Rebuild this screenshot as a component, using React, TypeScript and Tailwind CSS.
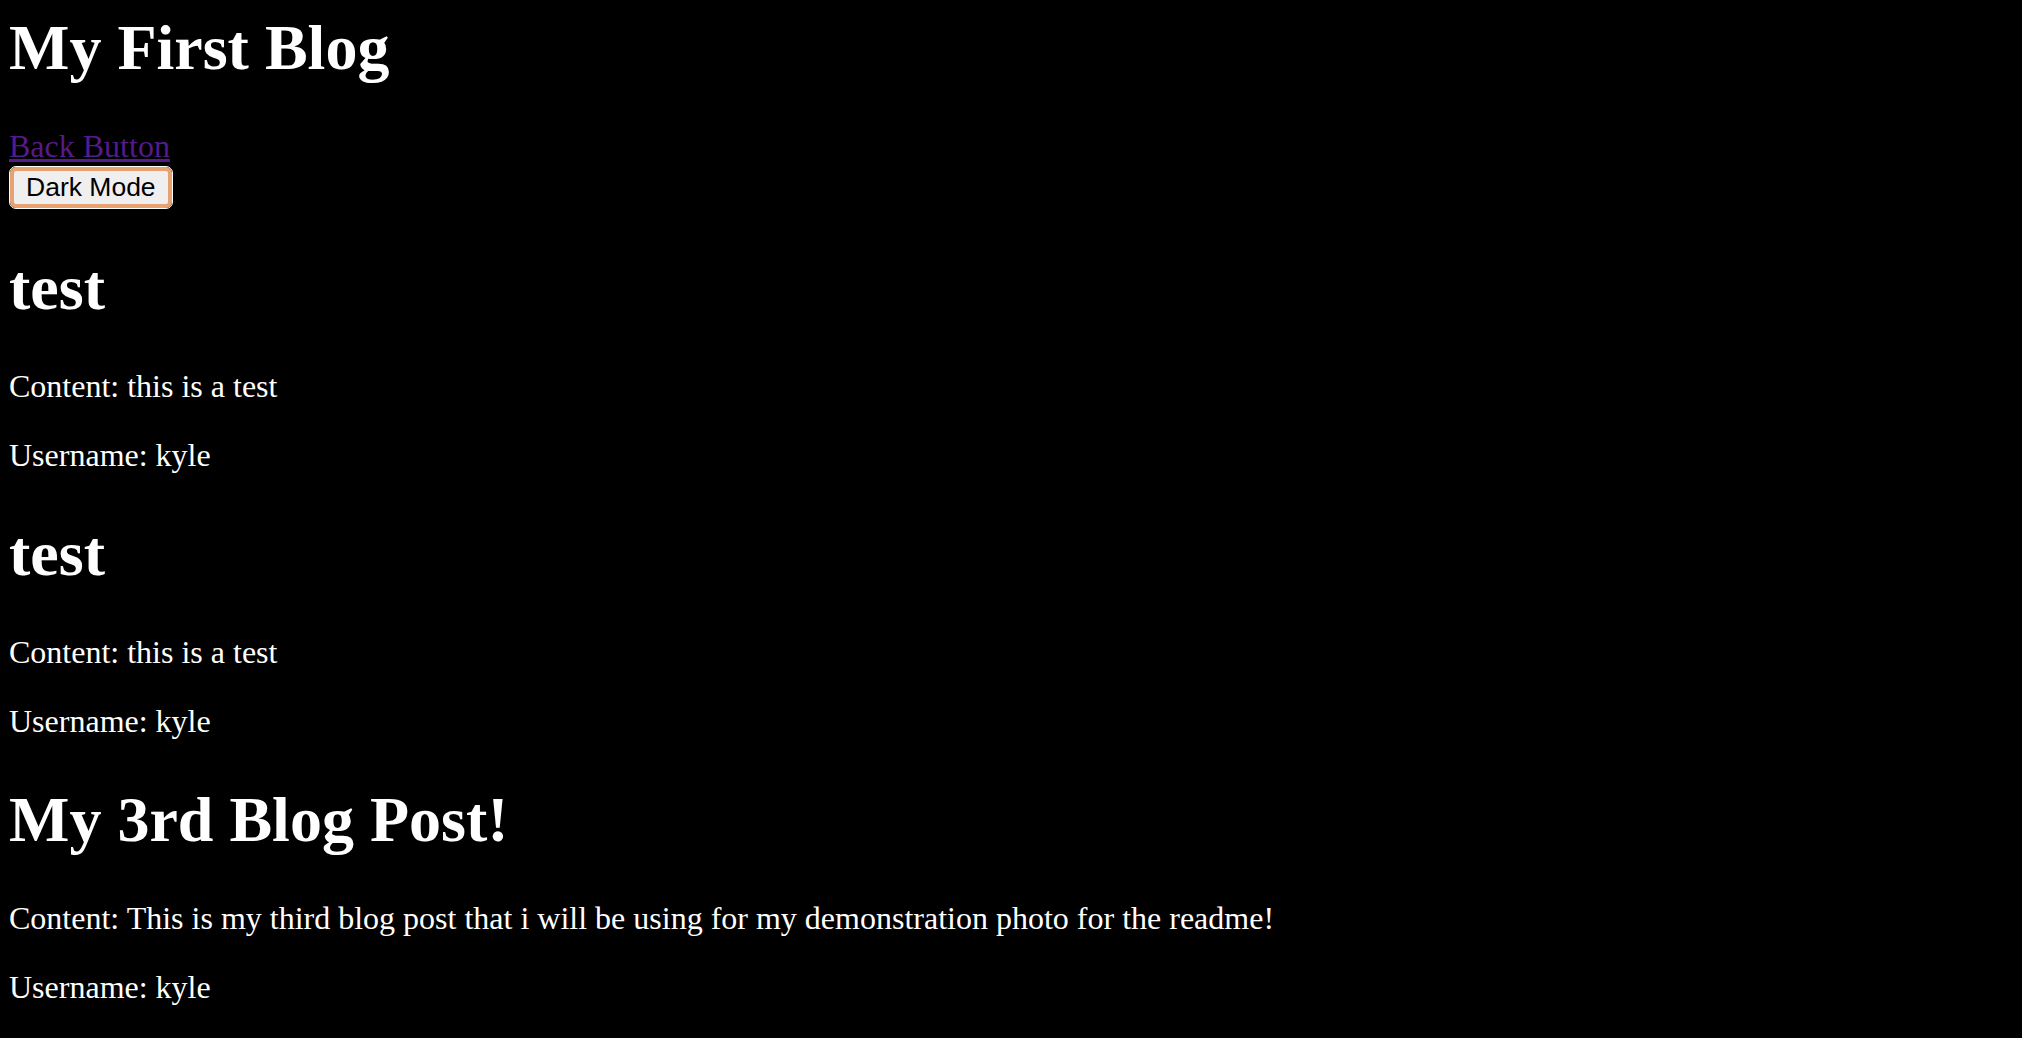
const POSTS = [
  { title: "test", content: "this is a test", username: "kyle" },
  { title: "test", content: "this is a test", username: "kyle" },
  {
    title: "My 3rd Blog Post!",
    content: "This is my third blog post that i will be using for my demonstration photo for the readme!",
    username: "kyle",
  },
];

export default function App() {
  return (
    <div className="min-h-screen bg-black text-white pt-[11px] pl-[9px] font-['Liberation_Serif','Times_New_Roman',serif]">
      <h1 className="text-[64px] font-bold leading-[normal] mb-[43px]">My First Blog</h1>

      <div>
        <a href="#" className="text-[32px] leading-[normal] text-[#551a8b] underline">
          Back Button
        </a>
      </div>
      <button className="block mt-[2px] ml-px px-[12px] py-px bg-[#efefef] text-black text-[26.5px] leading-[normal] font-['Liberation_Sans',Arial,sans-serif] border-4 border-[#e8a272] rounded-[6px] outline-1 outline-white">
        Dark Mode
      </button>

      {POSTS.map((p, i) => (
        <div key={i}>
          <h1 className="text-[64px] font-bold leading-[normal] mt-[43px] mb-[43px]">{p.title}</h1>
          <p className="text-[32px] leading-[normal] mb-[32px]">Content: {p.content}</p>
          <p className="text-[32px] leading-[normal] mb-[32px]">Username: {p.username}</p>
        </div>
      ))}
    </div>
  );
}
